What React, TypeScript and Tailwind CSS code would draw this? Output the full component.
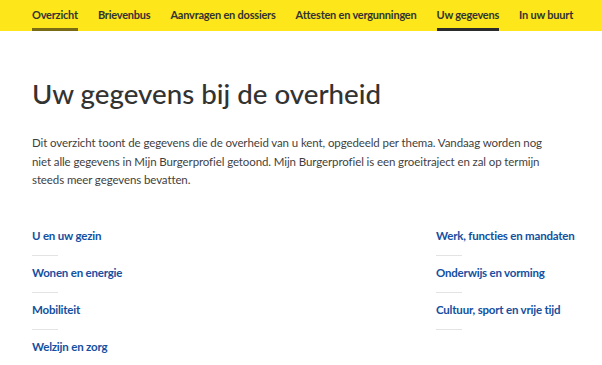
const navItems = [
  { label: "Overzicht", line: "bg-[#7a6c14]" },
  { label: "Brievenbus", line: "" },
  { label: "Aanvragen en dossiers", line: "" },
  { label: "Attesten en vergunningen", line: "" },
  { label: "Uw gegevens", line: "bg-[#2b2b2b]" },
  { label: "In uw buurt", line: "" },
]

const left = ["U en uw gezin", "Wonen en energie", "Mobiliteit", "Welzijn en zorg"]
const right = ["Werk, functies en mandaten", "Onderwijs en vorming", "Cultuur, sport en vrije tijd"]

function ThemeList({ items }: { items: string[] }) {
  return (
    <ul className="flex flex-col">
      {items.map((item) => (
        <li key={item} className="flex flex-col">
          <a
            href="#"
            className="whitespace-nowrap text-[11.5px] font-bold tracking-[-0.2px] text-[#144fa0] leading-[18px]"
          >
            {item}
          </a>
          <span className="mt-[10px] mb-[8.3px] h-px w-[26px] bg-[#e3e3e3]" />
        </li>
      ))}
    </ul>
  )
}

export default function App() {
  return (
    <div className="w-[602px] h-[365px] overflow-hidden bg-white font-['Lato',sans-serif] text-[#333332]">
      <nav className="h-[31px] bg-[#fde619] px-8">
        <ul className="flex h-full gap-5">
          {navItems.map((item) => (
            <li key={item.label} className="relative flex h-full items-center">
              <a
                href="#"
                className="whitespace-nowrap text-[11px] font-bold tracking-[-0.22px] text-[#333332]"
              >
                {item.label}
              </a>
              {item.line && (
                <span className={`absolute bottom-0 left-0 right-0 h-[3px] ${item.line}`} />
              )}
            </li>
          ))}
        </ul>
      </nav>

      <main className="px-8">
        <h1 className="mt-[45px] text-[27.7px] font-medium leading-[36px] text-[#333332]">
          Uw gegevens bij de overheid
        </h1>
        <p className="mt-[22px] max-w-[515px] text-[11.5px] tracking-[-0.1px] leading-[18.5px] text-[#3f3f3f]">
          Dit overzicht toont de gegevens die de overheid van u kent, opgedeeld per thema. Vandaag worden nog
          niet alle gegevens in Mijn Burgerprofiel getoond. Mijn Burgerprofiel is een groeitraject en zal op termijn
          steeds meer gegevens bevatten.
        </p>
        <div className="mt-[37px] grid grid-cols-[404px_1fr]">
          <ThemeList items={left} />
          <ThemeList items={right} />
        </div>
      </main>
    </div>
  )
}
